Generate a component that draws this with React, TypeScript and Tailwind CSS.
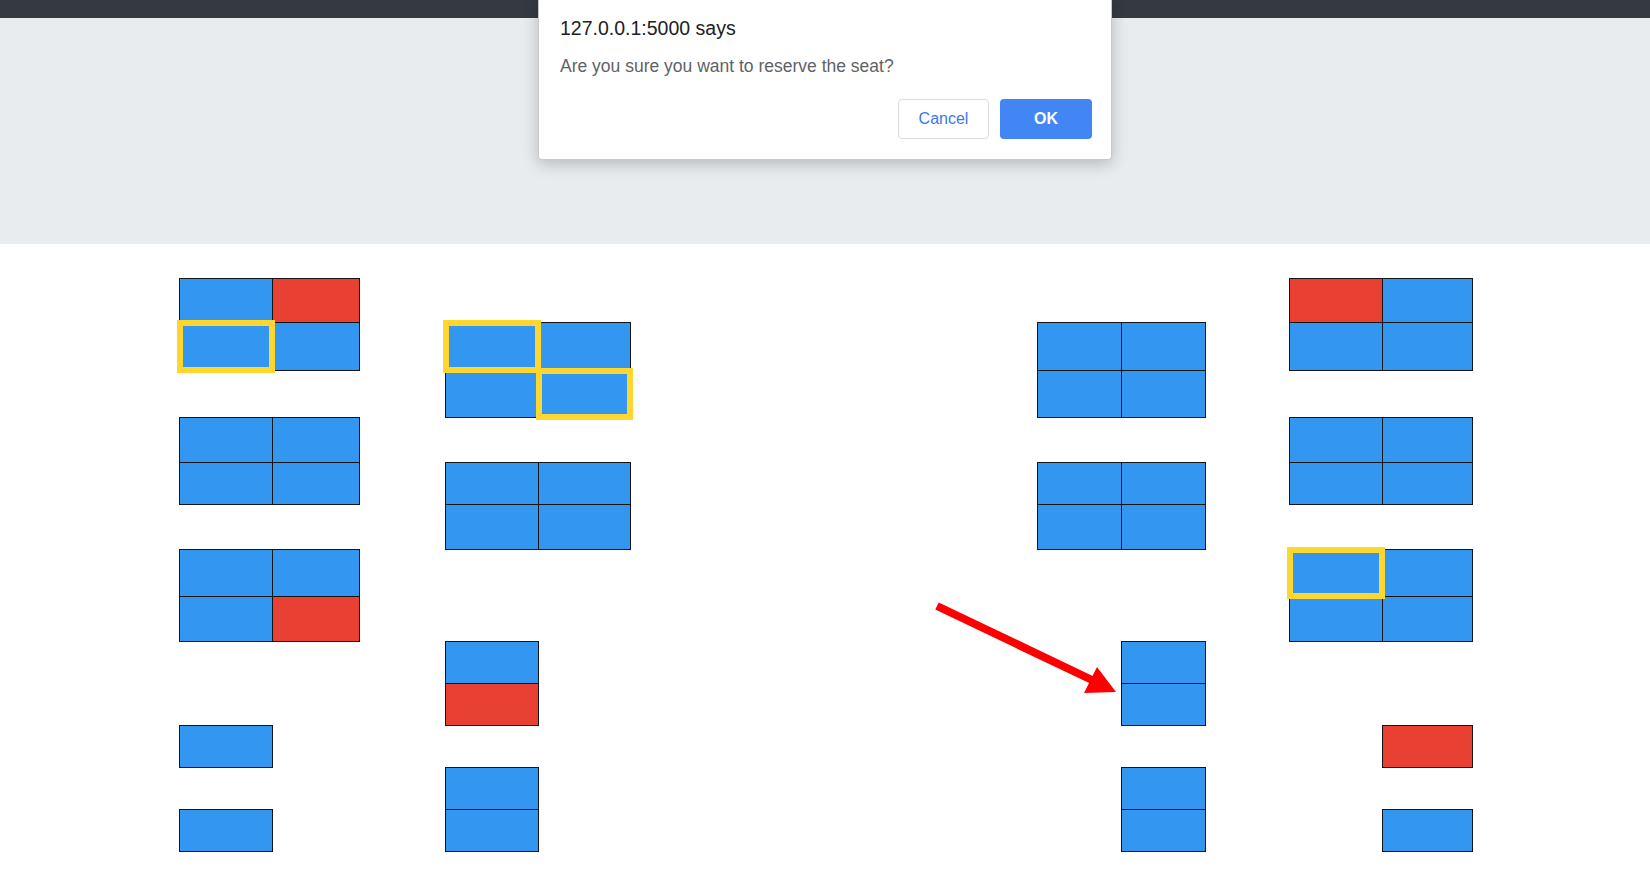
import clsx from "clsx";

type SeatState = "free" | "taken" | "picked";

type Seat = {
  row: number;
  col: number;
  state: SeatState;
};

const COL = [
  "col-start-1",
  "col-start-2",
  "col-start-3",
  "col-start-4",
  "col-start-5",
  "col-start-6",
  "col-start-7",
  "col-start-8",
  "col-start-9",
  "col-start-10",
  "col-start-11",
];

const ROW = [
  "row-start-1",
  "row-start-2",
  "row-start-3",
  "row-start-4",
  "row-start-5",
  "row-start-6",
  "row-start-7",
  "row-start-8",
  "row-start-9",
  "row-start-10",
  "row-start-11",
  "row-start-12",
  "row-start-13",
];

// helper for a block of seats, states listed row by row
function block(row: number, col: number, width: number, states: SeatState[]): Seat[] {
  return states.map((state, i) => ({
    row: row + Math.floor(i / width),
    col: col + (i % width),
    state,
  }));
}

const seats: Seat[] = [
  // left column
  ...block(1, 1, 2, ["free", "taken", "picked", "free"]),
  ...block(4, 1, 2, ["free", "free", "free", "free"]),
  ...block(7, 1, 2, ["free", "free", "free", "taken"]),
  ...block(11, 1, 1, ["free"]),
  ...block(13, 1, 1, ["free"]),
  // second column
  ...block(2, 4, 2, ["picked", "free", "free", "picked"]),
  ...block(5, 4, 2, ["free", "free", "free", "free"]),
  ...block(9, 4, 1, ["free", "taken"]),
  ...block(12, 4, 1, ["free", "free"]),
  // third column
  ...block(2, 7, 2, ["free", "free", "free", "free"]),
  ...block(5, 7, 2, ["free", "free", "free", "free"]),
  ...block(9, 8, 1, ["free", "free"]),
  ...block(12, 8, 1, ["free", "free"]),
  // right column
  ...block(1, 10, 2, ["taken", "free", "free", "free"]),
  ...block(4, 10, 2, ["free", "free", "free", "free"]),
  ...block(7, 10, 2, ["picked", "free", "free", "free"]),
  ...block(11, 11, 1, ["taken"]),
  ...block(13, 11, 1, ["free"]),
];

function SeatBox({ seat }: { seat: Seat }) {
  return (
    <div
      className={clsx(
        "border border-[#141414] -mr-px -mb-px",
        COL[seat.col - 1],
        ROW[seat.row - 1],
        seat.state === "taken" ? "bg-[#e84134]" : "bg-[#3397f1]",
        seat.state === "picked" &&
          "relative z-10 outline-[6px] outline-[#fdd62f] -outline-offset-4"
      )}
    />
  );
}

function ConfirmDialog() {
  return (
    <div className="absolute top-0 left-[538px] w-[574px] h-[160px] bg-white rounded-b-[4px] border border-t-0 border-[#c9c9c9] shadow-[0_4px_16px_rgba(0,0,0,0.22)] pl-[21px] pr-[19px] pt-[17px]">
      <h1 className="text-[19.5px] leading-[22px] text-[#202124]">127.0.0.1:5000 says</h1>
      <p className="mt-[17px] text-[17.5px] leading-[20px] text-[#5f6368]">
        Are you sure you want to reserve the seat?
      </p>
      <div className="mt-[23px] flex justify-end gap-[11px]">
        <button className="w-[91px] h-[40px] rounded-[4px] border border-[#dadce0] bg-white text-[16px] text-[#3b78e7]">
          Cancel
        </button>
        <button className="w-[92px] h-[40px] rounded-[4px] bg-[#4285f4] text-[16px] font-bold text-white">
          OK
        </button>
      </div>
    </div>
  );
}

export default function App() {
  return (
    <div className="relative w-[1650px] h-[873px] overflow-hidden bg-white font-['Liberation_Sans',Arial,sans-serif]">
      <div className="h-[18px] bg-[#343a40]" />
      <div className="h-[226px] bg-[#e9ecef]" />

      <div className="pt-[34px] pl-[179px]">
        <div className="grid grid-cols-[93px_87px_86px_93px_92px_407px_84px_84px_84px_93px_90px] grid-rows-[44px_48px_47px_45px_42px_45px_47px_45px_42px_42px_42px_42px_42px]">
          {seats.map((seat) => (
            <SeatBox key={`${seat.row}-${seat.col}`} seat={seat} />
          ))}
        </div>
      </div>

      {/* annotation arrow */}
      <svg
        className="absolute top-0 left-0 pointer-events-none"
        width="1650"
        height="873"
        viewBox="0 0 1650 873"
      >
        <line x1="937" y1="606" x2="1092" y2="680" stroke="#ff0000" strokeWidth="8" />
        <polygon points="1084,693 1097,667 1116,692" fill="#ff0000" />
      </svg>

      <ConfirmDialog />
    </div>
  );
}
